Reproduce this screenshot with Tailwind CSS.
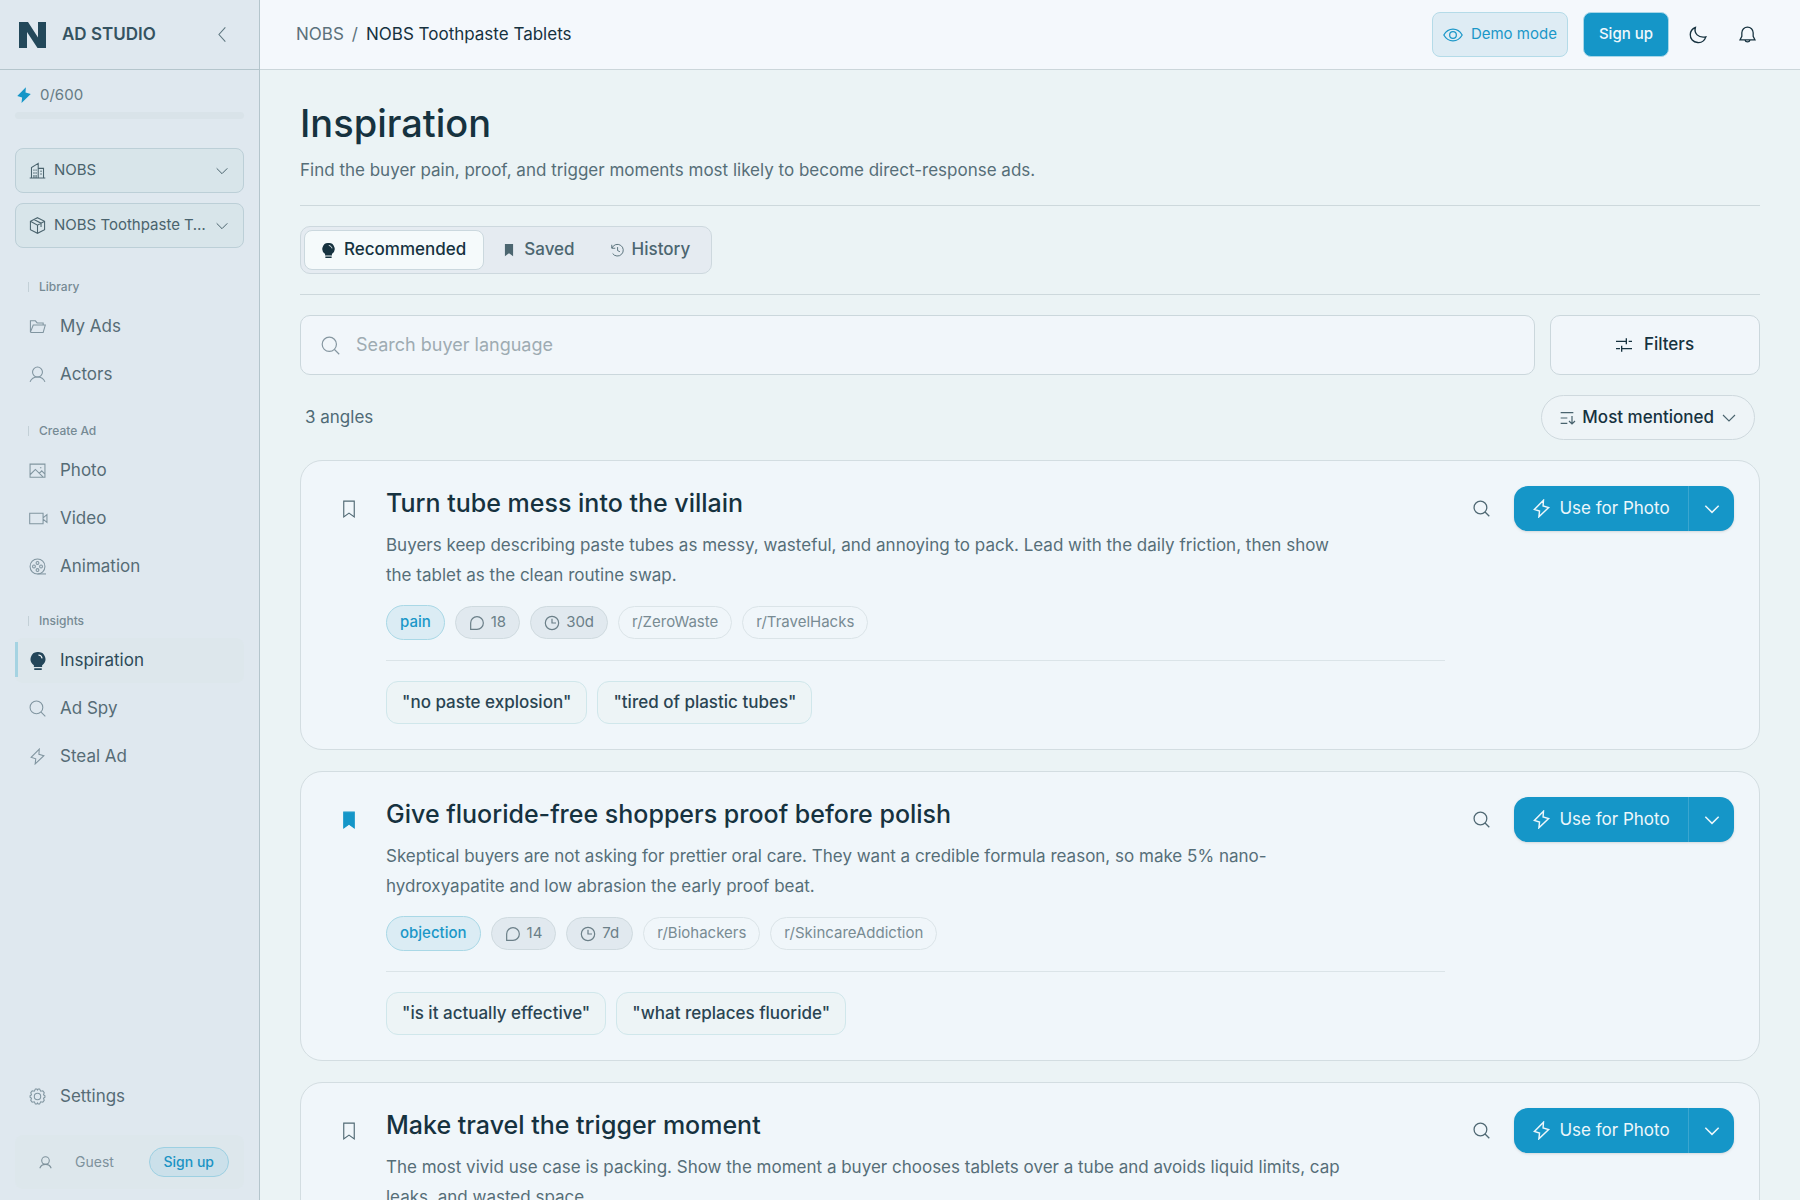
<!DOCTYPE html>
<html lang="en">
<head>
  <meta charset="UTF-8">
  <meta name="viewport" content="width=device-width, initial-scale=1.0">
  <title>Inspiration - NOBS Ad Studio</title>
  <script src="https://cdn.jsdelivr.net/npm/@tailwindcss/browser@4"></script>
</head>
<body class="h-screen flex overflow-hidden bg-[#ebf3f5] font-['Inter','Liberation_Sans',sans-serif] text-[17px] text-[#16323f]">

  <!-- Icon sprite -->
  <svg class="hidden" fill="none">
    <symbol id="i-bolt" viewBox="0 0 24 24"><path d="M14.5 1.500 3 13.200l6.500 2L8.700 22.500 21 10.800l-7-2z"/></symbol>
    <symbol id="i-down" viewBox="0 0 24 24"><path d="m4 8 8 8 8-8"/></symbol>
    <symbol id="i-left" viewBox="0 0 24 24"><path d="m16 2-9 10 9 10"/></symbol>
    <symbol id="i-search" viewBox="0 0 24 24"><circle cx="10.500" cy="10.500" r="9"/><path d="m17 17 6 6"/></symbol>
    <symbol id="i-user" viewBox="0 0 24 24"><circle cx="12" cy="8.500" r="7"/><path d="M1.500 22.500c1.500-4 5.500-7 10.500-7s9 3 10.500 7"/></symbol>
    <symbol id="i-bulb" viewBox="0 0 24 24"><path fill="currentColor" stroke="none" d="M12 0a9.500 9.500 0 0 0-5.500 17.500V20h11v-2.500A9.500 9.500 0 0 0 12 0zM7 21.500h10V24H7z"/><path stroke="#f5f9fb" d="M12.500 4c2.500.2 4.500 2 5 4.500"/></symbol>
    <symbol id="i-mark" viewBox="0 0 24 24"><path d="M5 1.500h14v21l-7-5-7 5z"/></symbol>
    <symbol id="i-clock" viewBox="0 0 24 24"><circle cx="12" cy="12" r="10"/><path d="M12 5.500V12h6"/></symbol>
    <symbol id="i-chat" viewBox="0 0 24 24"><path d="M2.500 21.500V12A9.500 9.500 0 1 1 12 21.500z"/></symbol>
  </svg>

  <!-- Sidebar -->
  <aside class="w-[260px] shrink-0 flex flex-col bg-[#dfe8ef] border-r border-[#b4c5cc]">
    <div class="h-[70px] shrink-0 flex items-center pl-[19px] pr-7 border-b border-[#b4c5cc]">
      <svg class="w-[27px] h-[26px]" viewBox="0 0 27 26" fill="#23485a"><path d="M0 0h9l10 15.500V0h8v26h-8.500L8 10v16H0z"/></svg>
      <span class="ml-4 font-semibold text-[#355361]">AD STUDIO</span>
      <button type="button" aria-label="Collapse sidebar" class="ml-auto text-[#5f7780]"><svg class="size-[17px]" fill="none" stroke="currentColor" stroke-width="1.500"><use href="#i-left"/></svg></button>
    </div>

    <div class="px-[15px] pt-4">
      <div class="flex items-center gap-[7px] text-[15px] text-[#667b84] h-[18px]">
        <svg class="size-[18px]" fill="#1596c8"><use href="#i-bolt"/></svg>
        <span>0/600</span>
      </div>
      <div class="mt-2 h-[7px] rounded-full bg-[#d9e3e9]"></div>
    </div>

    <div class="mt-[29px] px-[15px] flex flex-col gap-[10px]">
      <label class="h-[45px] flex items-center gap-2 px-[13px] rounded-lg border border-[#bccfd7] bg-[#d8e5ea] text-[15px] text-[#4a636d]">
        <svg class="size-[17px] shrink-0" viewBox="0 0 24 24" fill="none" stroke="currentColor" stroke-width="1.500"><path d="M1 22.500h22M3.500 22V8L13 2v20M13 9h7.500v13M7 10.500v2M10 10.500v2M7 14.500v2M10 14.500v2M7 18.500V22M10 18.500V22M17 12v2M17 16v2"/></svg>
        <select aria-label="Brand" class="flex-1 min-w-0 appearance-none outline-none"><option>NOBS</option></select>
        <svg class="size-4 shrink-0" fill="none" stroke="currentColor" stroke-width="1.500"><use href="#i-down"/></svg>
      </label>
      <label class="h-[45px] flex items-center gap-2 px-[13px] rounded-lg border border-[#bccfd7] bg-[#d8e5ea] text-[15px] text-[#4a636d]">
        <svg class="size-[17px] shrink-0" viewBox="0 0 24 24" fill="none" stroke="currentColor" stroke-width="1.500"><path d="m12 1 10 5v12l-10 5-10-5V6zM2 6l10 5.500L22 6M12 11.500V23M7 3.500l10 5.200V14"/></svg>
        <select aria-label="Product" class="flex-1 min-w-0 appearance-none outline-none truncate"><option>NOBS Toothpaste Tablets</option></select>
        <svg class="size-4 shrink-0" fill="none" stroke="currentColor" stroke-width="1.500"><use href="#i-down"/></svg>
      </label>
    </div>

    <nav class="mt-[29px] px-[15px] flex flex-col text-[#566c76]">
      <h2 class="ml-[13px] h-5 flex items-center gap-[10px] text-xs font-medium text-[#768a94]"><span class="w-px h-[10px] bg-[#c3d0d7]"></span>Library</h2>
      <div class="mt-[7px] mb-6 flex flex-col gap-[3px]">
        <a href="#" class="h-[45px] flex items-center gap-[14px] pl-[14px]">
          <svg class="size-[17px]" viewBox="0 0 24 24" fill="none" stroke="#8195a0" stroke-width="1.500"><path d="M2 20V4h7l2.500 3H20v3M2 20 6 10h17l-3 10.500H2"/></svg>My Ads</a>
        <a href="#" class="h-[45px] flex items-center gap-[14px] pl-[14px]">
          <svg class="size-[17px]" fill="none" stroke="#8195a0" stroke-width="1.500"><use href="#i-user"/></svg>Actors</a>
      </div>

      <h2 class="ml-[13px] h-5 flex items-center gap-[10px] text-xs font-medium text-[#768a94]"><span class="w-px h-[10px] bg-[#c3d0d7]"></span>Create Ad</h2>
      <div class="mt-[7px] mb-[22px] flex flex-col gap-[3px]">
        <a href="#" class="h-[45px] flex items-center gap-[14px] pl-[14px]">
          <svg class="size-[17px]" viewBox="0 0 24 24" fill="none" stroke="#8195a0" stroke-width="1.500"><path d="M1.500 3h21v18.500h-21zM1.500 18 9 10.500l11 11M14.500 16l3.500-3.500 4.500 4.500M15.500 8h2"/></svg>Photo</a>
        <a href="#" class="h-[45px] flex items-center gap-[14px] pl-[14px]">
          <svg class="w-[19px] h-[17px] -mr-[2px]" viewBox="0 0 27 24" fill="none" stroke="#8195a0" stroke-width="1.500"><path d="M1 4.500h19v15H1zM20 11l5.500-4.500v11L20 13"/></svg>Video</a>
        <a href="#" class="h-[45px] flex items-center gap-[14px] pl-[14px]">
          <svg class="size-[17px]" viewBox="0 0 24 24" fill="none" stroke="#8195a0" stroke-width="1.500"><circle cx="12" cy="12" r="10.500"/><circle cx="12" cy="7" r="2"/><circle cx="12" cy="17" r="2"/><circle cx="7" cy="12" r="2"/><circle cx="17" cy="12" r="2"/><path d="M12 22.500h12"/></svg>Animation</a>
      </div>

      <h2 class="ml-[13px] h-5 flex items-center gap-[10px] text-xs font-medium text-[#768a94]"><span class="w-px h-[10px] bg-[#c3d0d7]"></span>Insights</h2>
      <div class="mt-[7px] flex flex-col gap-[3px]">
        <a href="#" class="relative h-[45px] flex items-center gap-[14px] pl-[14px] rounded-lg bg-[#dde7ec] text-[#2c4a58]">
          <span class="absolute left-0 top-1 w-[3px] h-[35px] bg-[#a5d3e2]"></span>
          <svg class="size-[18px] -mr-px text-[#23465a]" fill="none" stroke-width="1.500"><use href="#i-bulb"/></svg>Inspiration</a>
        <a href="#" class="h-[45px] flex items-center gap-[14px] pl-[14px]">
          <svg class="size-[17px]" fill="none" stroke="#8195a0" stroke-width="1.500"><use href="#i-search"/></svg>Ad Spy</a>
        <a href="#" class="h-[45px] flex items-center gap-[14px] pl-[14px]">
          <svg class="size-[17px]" fill="none" stroke="#8195a0" stroke-width="1.500"><use href="#i-bolt"/></svg>Steal Ad</a>
      </div>
    </nav>

    <div class="mt-auto px-[15px] pb-[11px] text-[#566c76]">
      <a href="#" class="h-[45px] flex items-center gap-[14px] pl-[14px]">
        <svg class="size-[17px]" viewBox="0 0 24 24" fill="none" stroke="#8195a0" stroke-width="1.500"><circle cx="12" cy="12" r="4.500"/><path d="M9 1.500h2l1 1.500 1-1.500h2l1.500 3 3-.5 2 2.500-1 3 2 1.500v2l-2 1.500 1 3-2 2.500-3-.5-1.500 3h-2L12 21l-1 1.500H9L7.500 19.500l-3 .5-2-2.500 1-3-2-1.500v-2l2-1.500-1-3 2-2.500 3 .5z"/></svg>Settings</a>
      <div class="mt-4 h-[54px] flex items-center pl-6 pr-[15px] rounded-lg bg-[#dde7ec] text-sm text-[#7e929c]">
        <svg class="size-[13px]" fill="none" stroke="currentColor" stroke-width="2"><use href="#i-user"/></svg>
        <span class="ml-[23px]">Guest</span>
        <button type="button" class="ml-auto h-[30px] px-[14px] rounded-full border border-[#9dd0e2] bg-[#cbe0ea] font-medium text-[#1a93c4]">Sign up</button>
      </div>
    </div>
  </aside>

  <div class="flex-1 min-w-0 flex flex-col">
    <!-- Top bar -->
    <header class="h-[70px] shrink-0 flex items-center pl-9 pr-11 bg-[#f4f8fc] border-b border-[#cbd6da]">
      <nav class="flex items-center gap-2">
        <a href="#" class="text-[#5b717b]">NOBS</a>
        <span class="text-[#5b717b]">/</span>
        <span>NOBS Toothpaste Tablets</span>
      </nav>
      <div class="ml-auto flex items-center">
        <button type="button" class="h-[45px] flex items-center gap-2 px-[10px] rounded-lg border border-[#b4dbe8] bg-[#deecf4] text-[15px] text-[#1a97c8]">
          <svg class="size-5" viewBox="0 0 24 24" fill="none" stroke="currentColor" stroke-width="1.500"><path d="M1 12c2.500-4.500 6.500-7 11-7s8.500 2.500 11 7c-2.500 4.500-6.500 7-11 7S3.500 16.500 1 12z"/><circle cx="12" cy="12" r="4"/></svg>Demo mode</button>
        <button type="button" class="ml-[15px] h-[45px] px-[15px] rounded-lg border border-[#a9d7e8] bg-[#1596c8] text-[15px] font-medium text-[#f0f8fc]">Sign up</button>
        <button type="button" aria-label="Dark mode" class="ml-5"><svg class="size-[18px]" viewBox="0 0 24 24" fill="none" stroke="currentColor" stroke-width="1.800"><path d="M8.500 2C6.500 9.500 12 16.500 22.500 14.500 20.500 20 16 22.500 11.500 22 5.500 21.500 1.500 17 1.700 11.500 1.900 7 4.500 3.500 8.500 2z"/></svg></button>
        <button type="button" aria-label="Notifications" class="ml-8"><svg class="size-[17px]" viewBox="0 0 24 24" fill="none" stroke="currentColor" stroke-width="1.800"><path d="M1.500 19.500 4 14.500V9.500a8 8 0 0 1 16 0v5l2.500 5zM8.500 20c.5 2 1.800 2.500 3.500 2.500s3-.5 3.500-2.500"/></svg></button>
      </div>
    </header>

    <main class="flex-1 overflow-y-auto [scrollbar-width:none] px-10 pt-7">
      <h1 class="text-[38px] leading-[50px] font-medium">Inspiration</h1>
      <p class="mt-[9px] leading-[26px] text-[#566e78]">Find the buyer pain, proof, and trigger moments most likely to become direct-response ads.</p>

      <div class="mt-[22px] py-5 border-y border-[#cdd8dc]">
        <div role="tablist" class="w-fit h-12 flex p-[3px] rounded-[10px] border border-[#cdd8de] bg-[#e5ebf1] font-medium text-[#4c6670]">
          <button type="button" role="tab" aria-selected="true" class="flex items-center gap-2 pl-4 pr-[17px] rounded-lg border border-[#cbd8de] bg-[#f5fafb] text-[#16323f]">
            <svg class="size-[15px]" fill="none" stroke-width="1.500"><use href="#i-bulb"/></svg>Recommended</button>
          <button type="button" role="tab" aria-selected="false" class="flex items-center gap-2 px-[18px]">
            <svg class="size-[14px]" fill="currentColor"><use href="#i-mark"/></svg>Saved</button>
          <button type="button" role="tab" aria-selected="false" class="flex items-center gap-2 pl-[17px] pr-[18px]">
            <svg class="size-[14px]" viewBox="0 0 24 24" fill="none" stroke="currentColor" stroke-width="1.500"><path d="M3 3v6h6M3.500 8.500a10 10 0 1 1 1 9.500M13 7v6l4 2"/></svg>History</button>
        </div>
      </div>

      <div class="mt-5 flex gap-[15px]">
        <label class="flex-1 h-[60px] flex items-center gap-4 pl-5 pr-5 rounded-[10px] border border-[#cbd7dc] bg-[#f1f6fa] text-lg">
          <svg class="size-[19px]" fill="none" stroke="#8596a0" stroke-width="1.500"><use href="#i-search"/></svg>
          <input type="search" placeholder="Search buyer language" aria-label="Search buyer language" class="flex-1 outline-none placeholder:text-[#9eabb2]">
        </label>
        <button type="button" class="w-[210px] flex items-center justify-center gap-3 rounded-[10px] border border-[#cbd7dc] bg-[#f1f6fa] font-medium">
          <svg class="size-4" viewBox="0 0 24 24" fill="none" stroke="currentColor" stroke-width="2"><path d="M0 6.500h15M15.500 2v9M19 6.500h5M0 17.500h6M8.500 13v9M9 17.500h15"/></svg>Filters</button>
      </div>

      <div class="my-5 px-[5px] flex items-center">
        <span class="text-[#4f6a75]">3 angles</span>
        <label class="ml-auto h-[45px] flex items-center gap-[6px] pl-[18px] pr-4 rounded-full border border-[#cfd9de] bg-[#eef4f7] font-medium">
          <svg class="size-4" viewBox="0 0 24 24" fill="none" stroke="#49636e" stroke-width="1.800"><path d="M1 4h19M1 12h10M1 20h10M18 9v12M13.500 16.500 18 21l4.500-4.500"/></svg>
          <select aria-label="Sort by" class="appearance-none outline-none field-sizing-content"><option>Most mentioned</option></select>
          <svg class="size-[18px]" fill="none" stroke="#49636e" stroke-width="1.500"><use href="#i-down"/></svg>
        </label>
      </div>

      <div id="angles" class="flex flex-col gap-[21px] pb-10"></div>
    </main>
  </div>

  <script>
    const angles = [
      {
        title: 'Turn tube mess into the villain',
        text: 'Buyers keep describing paste tubes as messy, wasteful, and annoying to pack. Lead with the daily friction, then show the tablet as the clean routine swap.',
        type: 'pain', mentions: 18, age: '30d', saved: false,
        sources: ['r/ZeroWaste', 'r/TravelHacks'],
        quotes: ['no paste explosion', 'tired of plastic tubes']
      },
      {
        title: 'Give fluoride-free shoppers proof before polish',
        text: 'Skeptical buyers are not asking for prettier oral care. They want a credible formula reason, so make 5% nano-hydroxyapatite and low abrasion the early proof beat.',
        type: 'objection', mentions: 14, age: '7d', saved: true,
        sources: ['r/Biohackers', 'r/SkincareAddiction'],
        quotes: ['is it actually effective', 'what replaces fluoride']
      },
      {
        title: 'Make travel the trigger moment',
        text: 'The most vivid use case is packing. Show the moment a buyer chooses tablets over a tube and avoids liquid limits, cap leaks, and wasted space.',
        saved: false, sources: [], quotes: []
      }
    ];

    document.getElementById('angles').innerHTML = angles.map(a => `
      <article class="flex items-start p-[25px] rounded-[22px] border border-[#d3dde1] bg-[#f0f6fa]">
        <button type="button" aria-label="Save angle" class="w-[45px] h-[45px] shrink-0 grid place-items-center ${a.saved ? 'text-[#1596c8]' : 'text-[#4f6873]'}">
          <svg class="size-[18px]" fill="${a.saved ? 'currentColor' : 'none'}" stroke="currentColor" stroke-width="1.500"><use href="#i-mark"/></svg>
        </button>
        <div class="ml-[15px] mr-[14px] flex-1 min-w-0">
          <h2 class="text-[25px] leading-[34px] font-medium">${a.title}</h2>
          <p class="mt-[10px] max-w-[960px] leading-[30px] text-[#566e78]">${a.text}</p>
          ${a.type ? `
          <div class="mt-[15px] flex items-center gap-[10px] text-[15px] text-[#6b7f88]">
            <span class="h-[35px] px-[13px] flex items-center rounded-full border border-[#a9d8e6] bg-[#dbecf4] font-medium text-[#1a97c8]">${a.type}</span>
            <span class="h-[33px] px-[13px] flex items-center gap-[6px] rounded-full border border-[#cfdadf] bg-[#e1e9ef]"><svg class="size-4" fill="none" stroke="currentColor" stroke-width="1.800"><use href="#i-chat"/></svg>${a.mentions}</span>
            <span class="h-[33px] px-[13px] flex items-center gap-[6px] rounded-full border border-[#cfdadf] bg-[#e1e9ef]"><svg class="size-4" fill="none" stroke="currentColor" stroke-width="1.800"><use href="#i-clock"/></svg>${a.age}</span>
            ${a.sources.map(s => `<span class="h-[33px] px-[13px] flex items-center rounded-full border border-[#dbe4e8] text-[#788b93]">${s}</span>`).join('')}
          </div>
          <div class="mt-5 pt-5 flex gap-[10px] border-t border-[#dbe4e8]">
            ${a.quotes.map(q => `<span class="h-[43px] px-[15px] flex items-center rounded-xl border border-[#d0e7eb] bg-[#edf4f6] font-medium text-[#2a4452]">"${q}"</span>`).join('')}
          </div>` : ''}
        </div>
        <button type="button" aria-label="View sources" class="w-[44px] h-[45px] mr-[11px] shrink-0 grid place-items-center text-[#4f6873]">
          <svg class="size-[17px]" fill="none" stroke="currentColor" stroke-width="1.800"><use href="#i-search"/></svg>
        </button>
        <div class="h-[45px] shrink-0 flex rounded-[14px] bg-[#1596c8] text-[#edf7fb] shadow-sm">
          <button type="button" class="w-[175px] flex items-center justify-center gap-2 border-r border-[#3aa6d0]"><svg class="size-[19px]" fill="none" stroke="currentColor" stroke-width="1.800"><use href="#i-bolt"/></svg>Use for Photo</button>
          <button type="button" aria-label="More formats" class="w-[45px] grid place-items-center"><svg class="size-5" fill="none" stroke="currentColor" stroke-width="1.800"><use href="#i-down"/></svg></button>
        </div>
      </article>
    `).join('');
  </script>
</body>
</html>
